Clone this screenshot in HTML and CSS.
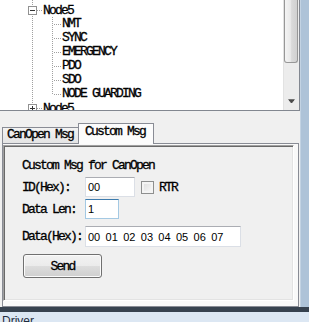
FILE: index.html
```html
<!DOCTYPE html>
<html lang="en">
<head>
  <meta charset="UTF-8" />
  <meta name="viewport" content="width=device-width, initial-scale=1" />
  <title>CanOpen - Custom Msg</title>
  <link rel="stylesheet" href="styles.css">
</head>
<body>
  <div class="app">
    <div class="workspace">

      <!-- object tree -->
      <div class="tree-pane">
        <div class="tree">
          <div class="node">
            <svg class="expander" width="9" height="9" viewBox="0 0 9 9"><rect x="0.5" y="0.5" width="8" height="8" fill="#fff" stroke="#919191"/><path d="M2 4.5h5" stroke="#333"/></svg>
            <span class="joint"></span>
            <span>Node5</span>
          </div>
          <div class="leaf">NMT</div>
          <div class="leaf">SYNC</div>
          <div class="leaf">EMERGENCY</div>
          <div class="leaf">PDO</div>
          <div class="leaf">SDO</div>
          <div class="leaf last">NODE GUARDING</div>
          <div class="node">
            <svg class="expander" width="9" height="9" viewBox="0 0 9 9"><rect x="0.5" y="0.5" width="8" height="8" fill="#fff" stroke="#919191"/><path d="M2 4.5h5M4.5 2v5" stroke="#333"/></svg>
            <span class="joint"></span>
            <span>Node5</span>
          </div>
        </div>
        <div class="vscroll">
          <div class="thumb"></div>
          <div class="track"></div>
          <div class="arrow-btn">
            <svg width="7" height="5" viewBox="0 0 7 5"><path d="M0 0h7M1 1h5L3.5 4z" stroke="#4a4a4a" fill="#4a4a4a" stroke-width="1"/></svg>
          </div>
        </div>
      </div>

      <!-- message tabs -->
      <div class="tab-area">
        <div class="tab-strip">
          <div class="tab">CanOpen Msg</div>
          <div class="tab active">Custom Msg</div>
        </div>
        <div class="tab-page">
          <div class="panel">
            <div class="panel-title">Custom Msg for CanOpen</div>

            <div class="field row-id">
              <label class="field-label">ID(Hex):</label>
              <input class="text-box id-box" type="text" value="00">
              <span class="check"></span>
              <span class="check-label">RTR</span>
            </div>

            <div class="field row-len">
              <label class="field-label">Data Len:</label>
              <input class="text-box len-box focused" type="text" value="1">
            </div>

            <div class="field row-data">
              <label class="field-label">Data(Hex):</label>
              <input class="text-box data-box" type="text" value="00 01 02 03 04 05 06 07">
            </div>

            <button class="send-btn">Send</button>
          </div>
        </div>
      </div>
    </div>
    <div class="side-strip"></div>
  </div>

  <div class="status-bar">Driver</div>
</body>
</html>
```

FILE: styles.css
```css
* {
  box-sizing: border-box;
}

body {
  margin: 0;
  width: 309px;
  height: 322px;
  overflow: hidden;
  background: #f0f0f0;
  font-family: "Liberation Mono", "Courier New", monospace;
  font-size: 13px;
  letter-spacing: -1.8px;
  color: #000;
  -webkit-text-stroke: 0.3px #000;
}

.app {
  display: flex;
  height: 307px;
}

.workspace {
  width: 300px;
  display: flex;
  flex-direction: column;
}

.side-strip {
  flex: 1;
  background: #aec3d8;
  border-left: 1px solid #c3d3e3;
}

/* tree */
.tree-pane {
  height: 111px;
  display: flex;
  background: #fff;
  border-bottom: 1px solid #828790;
  border-right: 1px solid #828790;
}

.tree {
  flex: 1;
  padding-top: 3px;
  overflow: hidden;
  background: repeating-linear-gradient(#a0a0a0 0 1px, transparent 1px 2px) 32px 0 / 1px 100% no-repeat;
}

.node {
  height: 14px;
  display: flex;
  align-items: center;
  padding-left: 28px;
}

.expander {
  display: block;
  flex: none;
}

.joint {
  width: 5px;
  height: 1px;
  margin-right: 1px;
  background: repeating-linear-gradient(to right, #a0a0a0 0 1px, transparent 1px 2px);
}

.leaf {
  height: 14px;
  line-height: 14px;
  padding-left: 62px;
  background:
    repeating-linear-gradient(to right, #a0a0a0 0 1px, transparent 1px 2px) 54px 7px / 7px 1px no-repeat,
    repeating-linear-gradient(#a0a0a0 0 1px, transparent 1px 2px) 52px 0 / 1px 100% no-repeat;
}

.leaf.last {
  background-size: 7px 1px, 1px 8px;
}

.vscroll {
  width: 16px;
  display: flex;
  flex-direction: column;
  background: #ececec;
  border-left: 1px solid #e2e2e2;
}

.thumb {
  height: 63px;
  margin: 0 1px 0 0;
  border: 1px solid #979797;
  border-top: 0;
  border-radius: 0 0 3px 3px;
  background: linear-gradient(to right, #f4f4f4, #e9e9e9 45%, #dadada 55%, #d0d0d0);
}

.track {
  flex: 1;
}

.arrow-btn {
  height: 17px;
  display: flex;
  align-items: center;
  justify-content: center;
}

/* tabs */
.tab-area {
  flex: 1;
  padding: 12px 1px 0 2px;
}

.tab-strip {
  height: 20px;
  display: flex;
  align-items: flex-end;
}

.tab {
  width: 76px;
  height: 16px;
  padding-left: 4px;
  line-height: 14px;
  border: 1px solid #898c95;
  border-bottom: 0;
  border-right: 0;
  background: linear-gradient(#f3f3f3, #e4e4e4);
  white-space: nowrap;
}

.tab.active {
  position: relative;
  z-index: 1;
  height: 21px;
  margin-bottom: -1px;
  padding-left: 6px;
  line-height: 16px;
  border-right: 1px solid #898c95;
  background: #fcfcfc;
}

.tab-page {
  height: 164px;
  padding: 1px 4px 5px 0;
  border: 1px solid #898c95;
  background: #f9f9f9;
}

.panel {
  height: 100%;
  padding: 13px 0 0 18px;
  border: 1px solid;
  border-color: #a0a0a0 #fff #fff #a0a0a0;
  box-shadow: inset 1px 1px 0 #696969, inset -1px -1px 0 #e3e3e3;
  background: #f0f0f0;
}

.panel-title {
  height: 14px;
  line-height: 14px;
  white-space: nowrap;
}

.field {
  display: flex;
  align-items: center;
  height: 20px;
}

.row-id {
  margin-top: 4px;
}

.row-len {
  margin-top: 2px;
}

.row-data {
  margin-top: 7px;
  height: 21px;
}

.field-label {
  width: 63px;
  flex: none;
  white-space: nowrap;
}

.text-box {
  height: 100%;
  margin: 0;
  padding: 0 2px;
  border: 1px solid #dbdfe6;
  border-top-color: #abadb3;
  border-radius: 0;
  background: #fff;
  font-family: "Liberation Sans", sans-serif;
  font-size: 11px;
  letter-spacing: 0;
  word-spacing: 2.3px;
  color: #000;
  -webkit-text-stroke: 0;
  outline: none;
}

.id-box {
  width: 50px;
}

.len-box {
  width: 34px;
}

.data-box {
  width: 156px;
}

.text-box.focused {
  border-color: #a4c9e3;
  border-top-color: #3d7bad;
}

.check {
  width: 13px;
  height: 13px;
  margin-left: 6px;
  border: 1px solid #8e8f8f;
  background: linear-gradient(135deg, #dcdcdc, #fbfbfb);
  box-shadow: inset 0 0 0 2px #f4f4f4;
}

.check-label {
  margin-left: 5px;
}

.send-btn {
  display: block;
  width: 79px;
  height: 24px;
  margin: 7px 0 0 1px;
  padding: 0;
  border: 1px solid #707070;
  border-radius: 3px;
  background: linear-gradient(#f2f2f2, #ebebeb 50%, #dddddd 50%, #cfcfcf);
  box-shadow: inset 0 0 0 1px #fbfbfb;
  font: inherit;
  letter-spacing: inherit;
  color: #000;
}

/* status */
.status-bar {
  height: 15px;
  border-top: 5px solid #37424f;
  padding: 2px 0 0 2px;
  background: #dce7f3;
  font-family: "Liberation Sans", sans-serif;
  font-size: 12px;
  letter-spacing: 0;
  line-height: 14px;
  color: #1e2c3e;
  -webkit-text-stroke: 0;
}
```
